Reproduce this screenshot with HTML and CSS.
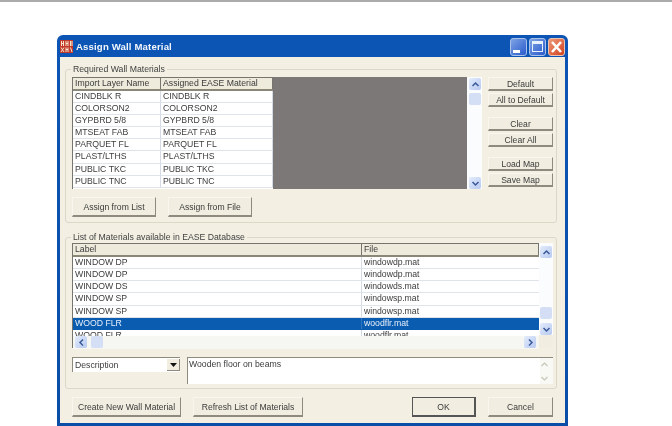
FILE: index.html
```html
<!DOCTYPE html>
<html>
<head>
<meta charset="utf-8">
<title>Assign Wall Material</title>
<link rel="stylesheet" href="styles.css">
</head>
<body>
<div class="topbar"></div>
<div class="window">
  <div class="titlebar">
    <svg class="appicon" width="13" height="13" viewBox="0 0 13 13">
      <rect width="13" height="13" fill="#c23b2a"/>
      <path d="M1.500 1v5M3.500 1v5M1.500 3.500h2M6 1v5M8 1v5M6 3.500h2M10.500 1v5M12 1v5M1 7.500l3 4.500M4 7.500l-3 4.500M6 7.500v4.500M8 7.500v4.500M6 9.500h2M10.500 7.500l1.500 4.500" stroke="#f7e7cf" stroke-width="1" fill="none"/>
    </svg>
    <span class="title">Assign Wall Material</span>
    <span class="caps">
      <span class="cap cap-min"><i></i></span>
      <span class="cap cap-max"><i></i></span>
      <span class="cap cap-close">
        <svg width="17" height="18" viewBox="0 0 17 18"><path d="M4 4l9 10M13 4L4 14" stroke="#fff" stroke-width="2.600"/></svg>
      </span>
    </span>
  </div>
  <div class="client">
    <section class="group group-req">
      <span class="legend">Required Wall Materials</span>
      <div class="req-top">
        <div class="req-list">
          <div class="req-table">
            <div class="hrow"><span class="hcell c1">Import Layer Name</span><span class="hcell c2">Assigned EASE Material</span></div>
            <div class="row"><span class="cell c1">CINDBLK R</span><span class="cell c2">CINDBLK R</span></div>
            <div class="row"><span class="cell c1">COLORSON2</span><span class="cell c2">COLORSON2</span></div>
            <div class="row"><span class="cell c1">GYPBRD 5/8</span><span class="cell c2">GYPBRD 5/8</span></div>
            <div class="row"><span class="cell c1">MTSEAT FAB</span><span class="cell c2">MTSEAT FAB</span></div>
            <div class="row"><span class="cell c1">PARQUET FL</span><span class="cell c2">PARQUET FL</span></div>
            <div class="row"><span class="cell c1">PLAST/LTHS</span><span class="cell c2">PLAST/LTHS</span></div>
            <div class="row"><span class="cell c1">PUBLIC TKC</span><span class="cell c2">PUBLIC TKC</span></div>
            <div class="row"><span class="cell c1">PUBLIC TNC</span><span class="cell c2">PUBLIC TNC</span></div>
          </div>
          <div class="grey"></div>
          <div class="vscroll vs-req">
            <span class="sbtn"><svg width="9" height="7" viewBox="0 0 9 7"><path d="M1.500 5l3-3 3 3" class="chev"/></svg></span>
            <span class="thumb thumb-req"></span>
            <span class="track"></span>
            <span class="sbtn"><svg width="9" height="7" viewBox="0 0 9 7"><path d="M1.500 2l3 3 3-3" class="chev"/></svg></span>
          </div>
        </div>
        <div class="side">
          <button class="btn sb">Default</button>
          <button class="btn sb">All to Default</button>
          <button class="btn sb gap">Clear</button>
          <button class="btn sb">Clear All</button>
          <button class="btn sb gap">Load Map</button>
          <button class="btn sb">Save Map</button>
        </div>
      </div>
      <div class="assign">
        <button class="btn ab">Assign from List</button>
        <button class="btn ab">Assign from File</button>
      </div>
    </section>
    <section class="group group-mat">
      <span class="legend">List of Materials available in EASE Database</span>
      <div class="mat-list">
        <div class="mat-main">
          <div class="mat-rows">
            <div class="hrow mh"><span class="hcell m1">Label</span><span class="hcell m2">File</span></div>
            <div class="row mr"><span class="cell m1">WINDOW DP</span><span class="cell m2">windowdp.mat</span></div>
            <div class="row mr"><span class="cell m1">WINDOW DP</span><span class="cell m2">windowdp.mat</span></div>
            <div class="row mr"><span class="cell m1">WINDOW DS</span><span class="cell m2">windowds.mat</span></div>
            <div class="row mr"><span class="cell m1">WINDOW SP</span><span class="cell m2">windowsp.mat</span></div>
            <div class="row mr"><span class="cell m1">WINDOW SP</span><span class="cell m2">windowsp.mat</span></div>
            <div class="row mr sel"><span class="cell m1">WOOD FLR</span><span class="cell m2">woodflr.mat</span></div>
            <div class="row mr cut"><span class="cell m1">WOOD FLR</span><span class="cell m2">woodflr.mat</span></div>
          </div>
          <div class="hscroll">
            <span class="sbtn"><svg width="7" height="9" viewBox="0 0 7 9"><path d="M5 1.500l-3 3 3 3" class="chev"/></svg></span>
            <span class="thumb thumb-h"></span>
            <span class="track"></span>
            <span class="sbtn"><svg width="7" height="9" viewBox="0 0 7 9"><path d="M2 1.500l3 3-3 3" class="chev"/></svg></span>
          </div>
        </div>
        <div class="vscroll vs-mat">
          <span class="sbtn"><svg width="9" height="7" viewBox="0 0 9 7"><path d="M1.500 5l3-3 3 3" class="chev"/></svg></span>
          <span class="track"></span>
          <span class="thumb thumb-mat"></span>
          <span class="sbtn"><svg width="9" height="7" viewBox="0 0 9 7"><path d="M1.500 2l3 3 3-3" class="chev"/></svg></span>
          <span class="corner"></span>
        </div>
      </div>
      <div class="desc">
        <div class="combo">
          <span class="combo-text">Description</span>
          <span class="combo-btn"><svg width="7" height="4" viewBox="0 0 7 4"><path d="M0 0h7L3.500 4z" fill="#111"/></svg></span>
        </div>
        <div class="memo">
          <span class="memo-text">Wooden floor on beams</span>
          <div class="memo-scroll">
            <svg width="9" height="7" viewBox="0 0 9 7"><path d="M1.500 5l3-3 3 3" class="chev-off"/></svg>
            <svg width="9" height="7" viewBox="0 0 9 7"><path d="M1.500 2l3 3 3-3" class="chev-off"/></svg>
          </div>
        </div>
      </div>
    </section>
    <div class="footer">
      <button class="btn fb-create">Create New Wall Material</button>
      <button class="btn fb-refresh">Refresh List of Materials</button>
      <span class="spacer"></span>
      <button class="btn fb-ok">OK</button>
      <button class="btn fb-cancel">Cancel</button>
    </div>
  </div>
</div>
</body>
</html>
```
FILE: styles.css
```css
* { box-sizing: border-box; }
html, body { margin: 0; padding: 0; }
body {
  width: 672px;
  height: 426px;
  overflow: hidden;
  background: #fff;
  font-family: "Liberation Sans", Arial, sans-serif;
  font-size: 8.700px;
  color: #3c3c3c;
}
.topbar { height: 2px; background: #ababab; }

.window {
  width: 511px;
  height: 391px;
  margin: 33px 0 0 57px;
  background: linear-gradient(#0d55b5, #0a4ea8);
  border-radius: 6px 6px 0 0;
  padding: 0 3px 3px;
  display: flex;
  flex-direction: column;
  filter: blur(0.3px);
}
.titlebar {
  height: 22px;
  flex: none;
  display: flex;
  align-items: center;
  padding: 1px 0 0 0;
  color: #fff;
}
.appicon { flex: none; margin-right: 3px; }
.title {
  font-weight: bold;
  font-size: 9.600px;
  letter-spacing: 0.150px;
  color: #f2f6fb;
}
.caps { margin-left: auto; display: flex; gap: 2px; padding: 0; }
.cap {
  width: 17px;
  height: 18px;
  border-radius: 3px;
  border: 1px solid #a9c2ea;
  position: relative;
  display: block;
}
.cap-min { background: linear-gradient(135deg, #7ea2e4, #2a5ccc); }
.cap-min i { position: absolute; left: 2px; bottom: 2px; width: 7px; height: 3px; background: #fff; }
.cap-max { background: linear-gradient(135deg, #7ea2e4, #2a5ccc); }
.cap-max i { position: absolute; left: 2px; top: 2px; width: 11px; height: 11px; border: 1px solid #e8f0fb; border-top-width: 3px; }
.cap-close { background: linear-gradient(135deg, #ef9a78, #d1421f); border-color: #e9c4b4; }
.cap-close svg { position: absolute; left: -1px; top: -1px; }

.client {
  flex: 1;
  background: #f3f0e3;
  padding: 12px 8px 0 5px;
  display: flex;
  flex-direction: column;
}
.group {
  position: relative;
  border: 1px solid #dcd8c8;
  border-radius: 3px;
  padding: 0 3px 0 6px;
  flex: none;
}
.legend {
  position: absolute;
  left: 5px;
  top: -6px;
  background: #f3f0e3;
  padding: 0 2px;
  line-height: 11px;
  color: #3f3f3f;
}
.group-req { height: 154px; padding-top: 7px; }
.group-mat { height: 152px; margin-top: 14px; padding-top: 5px; }

.req-top { display: flex; gap: 6px; }
.req-list {
  display: flex;
  width: 410px;
  height: 112px;
  flex: none;
  border-left: 1px solid #77766e;
  background: #fff;
}
.req-table { width: 200px; flex: none; overflow: hidden; }
.grey { width: 194px; flex: none; background: #7b7877; }
.hrow {
  display: flex;
  height: 14px;
  background: #eeeadc;
  border-top: 1px solid #77766e;
  border-bottom: 2px solid #8a8678;
}
.hcell { line-height: 11px; padding-left: 2px; color: #3a3a3a; border-right: 1px solid #77766e; white-space: nowrap; overflow: hidden; }
.row { display: flex; height: 12.100px; border-bottom: 1px solid #dfe3ea; }
.cell { line-height: 10px; padding-left: 2px; white-space: nowrap; border-right: 1px solid #d5dbe4; overflow: hidden; }
.c1 { width: 88px; flex: none; }
.c2 { width: 112px; flex: none; }

.vscroll { display: flex; flex-direction: column; flex: none; background: #fbfcfe; }
.vs-req { width: 15px; padding: 1px 1px 0 2px; }
.sbtn {
  width: 12px;
  height: 12px;
  flex: none;
  border-radius: 2px;
  background: linear-gradient(135deg, #e4ecfb, #b6c9f0);
  display: flex;
  align-items: center;
  justify-content: center;
}
.chev { fill: none; stroke: #3a5a9a; stroke-width: 1.500; }
.chev-off { fill: none; stroke: #c8c6b8; stroke-width: 1.200; }
.thumb { display: block; flex: none; background: #d4dff5; border-radius: 2px; }
.thumb-req { width: 12px; height: 12px; margin-top: 3px; }
.track { flex: 1; display: block; }

.side { display: flex; flex-direction: column; width: 65px; flex: none; }
.btn {
  display: block;
  font-family: "Liberation Sans", Arial, sans-serif;
  font-size: 8.600px;
  color: #3a3a3a;
  background: #f1eee1;
  border: 1px solid #f8f6ee;
  border-right: 1px solid #8e8b7e;
  border-bottom: 2px solid #8e8b7e;
  padding: 0;
  border-radius: 0;
  white-space: nowrap;
  text-align: center;
}
.sb { height: 14px; margin-bottom: 2px; line-height: 10px; }
.sb.gap { margin-top: 8px; }

.assign { display: flex; gap: 12px; margin-top: 8px; }
.ab { width: 84px; height: 20px; }

.mat-list { display: flex; height: 105px; }
.mat-main { width: 467px; flex: none; display: flex; flex-direction: column; border-left: 1px solid #77766e; }
.mat-rows { height: 93px; background: #fff; overflow: hidden; flex: none; }
.mh { height: 13.500px; }
.mr { height: 12.300px; }
.mr .cell { line-height: 11px; }
.m1 { width: 289px; flex: none; }
.m2 { flex: 1; }
.mr .m2 { border-right: 0; }
.sel { background: #0a5cb0; border-bottom-color: #0a5cb0; }
.sel .cell { color: #e6eefa; border-color: #2c74c0; }
.hscroll { height: 13px; flex: none; display: flex; background: #f6f6f2; padding: 0 3px 1px 2px; }
.thumb-h { width: 12px; height: 12px; margin-left: 4px; }
.vs-mat { width: 14px; padding-top: 3px; }
.vs-mat .sbtn, .thumb-mat { margin-left: 1px; }
.thumb-mat { width: 12px; height: 12px; margin-bottom: 4px; }
.corner { display: block; height: 13px; background: #f1eee1; flex: none; }

.desc { display: flex; gap: 7px; margin-top: 9px; }
.combo {
  width: 108px;
  height: 15px;
  flex: none;
  background: #fff;
  border-left: 1px solid #8e8b7e;
  border-top: 1px solid #8e8b7e;
  display: flex;
  align-items: center;
  padding-left: 2px;
}
.combo-text { flex: 1; }
.combo-btn {
  width: 13px;
  height: 12px;
  background: #f1eee1;
  border-right: 1px solid #8e8b7e;
  border-bottom: 1px solid #8e8b7e;
  display: flex;
  align-items: center;
  justify-content: center;
}
.memo {
  flex: 1;
  height: 27px;
  background: #fff;
  border-left: 1px solid #8e8b7e;
  border-top: 1px solid #8e8b7e;
  display: flex;
  justify-content: space-between;
}
.memo-text { padding: 1px 0 0 1px; line-height: 11px; }
.memo-scroll { width: 13px; display: flex; flex-direction: column; justify-content: space-between; padding: 3px 0 2px; background: #f8f8f4; }

.footer { display: flex; margin-top: 8px; align-items: flex-start; }
.fb-create { width: 109px; height: 20px; margin-left: 7px; }
.fb-refresh { width: 110px; height: 20px; margin-left: 12px; }
.spacer { flex: 1; }
.fb-ok { width: 64px; height: 20px; border: 1px solid #555; border-right-width: 2px; border-bottom-width: 2px; }
.fb-cancel { width: 65px; height: 20px; margin-left: 12px; margin-right: 4px; }
```
